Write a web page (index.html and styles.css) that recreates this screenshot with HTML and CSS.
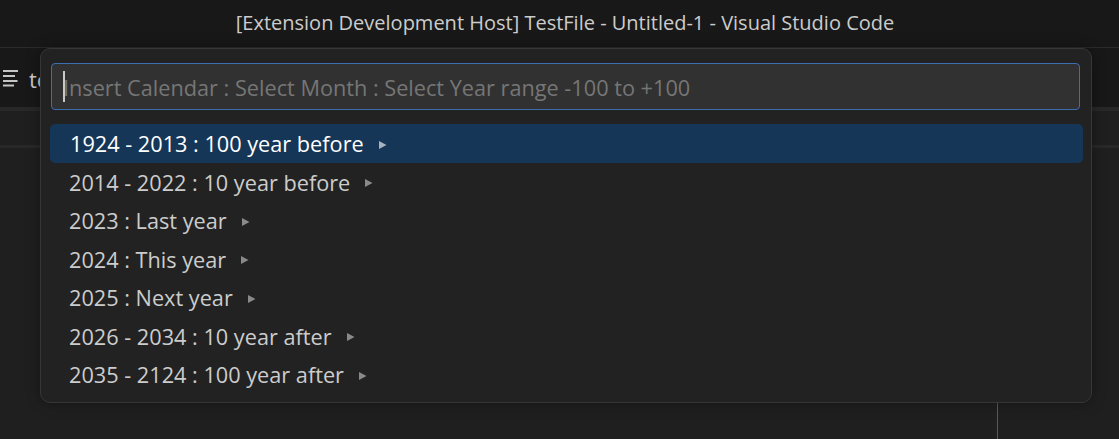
FILE: index.html
```html
<!DOCTYPE html>
<html lang="en">
<head>
<meta charset="utf-8">
<title>TestFile - Untitled-1 - Visual Studio Code</title>
<link rel="stylesheet" href="styles.css">
</head>
<body>
<div class="window">
  <header class="titlebar">[Extension Development Host] TestFile - Untitled-1 - Visual Studio Code</header>
  <div class="tabbar">
    <svg class="file-icon" width="18" height="18" viewBox="0 0 18 18" aria-hidden="true">
      <path d="M3 1h15M3 6h12M3 11h14.5M3 15.5h11" stroke="#c5c5c5" stroke-width="2" fill="none"/>
    </svg>
    <span class="tab-label">test</span>
  </div>
  <div class="breadcrumbs"></div>
  <main class="editor"><div class="sash"></div></main>

  <section class="quick-input">
    <div class="input-box">
      <span class="caret"></span>
      <span class="placeholder">Insert Calendar : Select Month : Select Year range -100 to +100</span>
    </div>
    <ul class="list">
      <li class="item active"><span>1924 - 2013 : 100 year before</span><svg class="arrow" width="8" height="8" viewBox="0 0 8 8" aria-hidden="true"><path d="M0 0 7.5 4 0 8Z"/></svg></li>
      <li class="item"><span>2014 - 2022 : 10 year before</span><svg class="arrow" width="8" height="8" viewBox="0 0 8 8" aria-hidden="true"><path d="M0 0 7.5 4 0 8Z"/></svg></li>
      <li class="item"><span>2023 : Last year</span><svg class="arrow" width="8" height="8" viewBox="0 0 8 8" aria-hidden="true"><path d="M0 0 7.5 4 0 8Z"/></svg></li>
      <li class="item"><span>2024 : This year</span><svg class="arrow" width="8" height="8" viewBox="0 0 8 8" aria-hidden="true"><path d="M0 0 7.5 4 0 8Z"/></svg></li>
      <li class="item"><span>2025 : Next year</span><svg class="arrow" width="8" height="8" viewBox="0 0 8 8" aria-hidden="true"><path d="M0 0 7.5 4 0 8Z"/></svg></li>
      <li class="item"><span>2026 - 2034 : 10 year after</span><svg class="arrow" width="8" height="8" viewBox="0 0 8 8" aria-hidden="true"><path d="M0 0 7.5 4 0 8Z"/></svg></li>
      <li class="item"><span>2035 - 2124 : 100 year after</span><svg class="arrow" width="8" height="8" viewBox="0 0 8 8" aria-hidden="true"><path d="M0 0 7.5 4 0 8Z"/></svg></li>
    </ul>
  </section>
</div>
</body>
</html>
```
FILE: styles.css
```css
* { box-sizing: border-box; }
html, body { margin: 0; height: 100%; background: #1f1f1f; overflow: hidden; }
body { font-family: "Open Sans", "Noto Sans", sans-serif; }
.window { position: relative; width: 1119px; height: 439px; display: flex; flex-direction: column; }
.titlebar {
  height: 48px; flex: none; background: #181818; border-bottom: 1px solid #2b2b2b;
  color: #cccccc; font-size: 20px; display: flex; align-items: center; justify-content: center;
  padding: 0 0 3px 11px;
}
.tabbar {
  height: 59px; flex: none; display: flex; align-items: center;
  padding: 2px 0 0 0; gap: 11px; color: #cccccc; font-size: 22px;
  background: #181818;
}
.file-icon { flex: none; }
.breadcrumbs { height: 41px; flex: none; background: #1f1f1f; border-top: 4px solid #282828; border-bottom: 3px solid #282828; }
.editor { flex: 1; position: relative; background: #1f1f1f; }
.sash { position: absolute; left: 997px; top: 0; bottom: 0; width: 1px; background: #5a5a5a; }
.quick-input {
  position: absolute; left: 40px; top: 48px; width: 1052px; height: 355px;
  background: #222222; border: 1px solid #363636; border-radius: 10px;
  box-shadow: 0 0 14px rgba(0,0,0,.36); padding: 14px 9px 0 9px;
}
.input-box {
  height: 47px; margin: 0 2px 0 1px; width: 1029px; background: #313131;
  border: 1px solid #3d6fb0; border-radius: 4px; display: flex; align-items: center;
  padding: 2px 0 0 11px; font-size: 21.7px; color: #767676; position: relative;
}
.caret { position: absolute; left: 11px; top: 7px; width: 2px; height: 31px; background: #c8c8c8; }
.list { list-style: none; margin: 14.3px 0 0; padding: 0; }
.item {
  height: 38.5px; display: flex; align-items: center; padding-left: 19px; gap: 15px;
  color: #cccccc; font-size: 21.7px; border-radius: 5px; width: 1033px;
}
.item.active { background: #153657; color: #ffffff; padding-left: 20px; }
.arrow { flex: none; fill: #8a8a8a; margin-top: 2px; }
.item.active .arrow { fill: #a9b3c0; }
```
